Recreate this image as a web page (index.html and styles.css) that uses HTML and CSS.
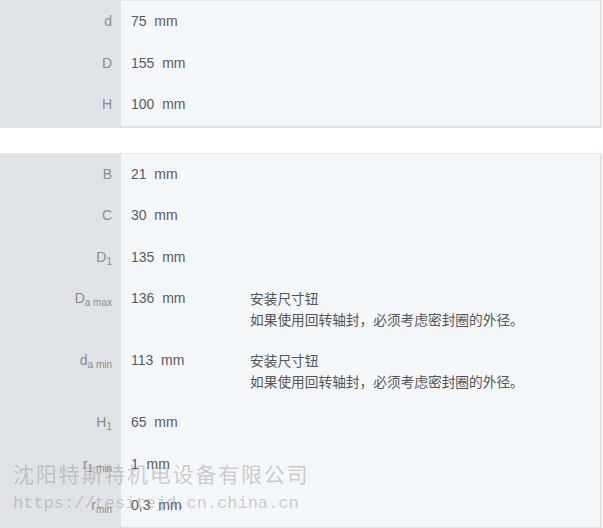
FILE: index.html
```html
<!DOCTYPE html>
<html lang="zh-CN">
<head>
    <meta charset="UTF-8">
    <title>尺寸</title>
    <link rel="stylesheet" href="styles.css">
</head>
<body>
    <div class="page">
        <table class="spec">
            <tr><th>d</th><td class="val">75&nbsp;&nbsp;mm</td><td class="note"></td></tr>
            <tr><th>D</th><td class="val">155&nbsp;&nbsp;mm</td><td class="note"></td></tr>
            <tr><th>H</th><td class="val">100&nbsp;&nbsp;mm</td><td class="note"></td></tr>
        </table>

        <table class="spec">
            <tr><th>B</th><td class="val">21&nbsp;&nbsp;mm</td><td class="note"></td></tr>
            <tr><th>C</th><td class="val">30&nbsp;&nbsp;mm</td><td class="note"></td></tr>
            <tr><th>D<sub>1</sub></th><td class="val">135&nbsp;&nbsp;mm</td><td class="note"></td></tr>
            <tr>
                <th>D<sub>a max</sub></th>
                <td class="val">136&nbsp;&nbsp;mm</td>
                <td class="note">安装尺寸钮<br>如果使用回转轴封，必须考虑密封圈的外径。</td>
            </tr>
            <tr>
                <th>d<sub>a min</sub></th>
                <td class="val">113&nbsp;&nbsp;mm</td>
                <td class="note">安装尺寸钮<br>如果使用回转轴封，必须考虑密封圈的外径。</td>
            </tr>
            <tr><th>H<sub>1</sub></th><td class="val">65&nbsp;&nbsp;mm</td><td class="note"></td></tr>
            <tr><th>r<sub>1 min</sub></th><td class="val">1&nbsp;&nbsp;mm</td><td class="note"></td></tr>
            <tr><th>r<sub>min</sub></th><td class="val">0,3&nbsp;&nbsp;mm</td><td class="note"></td></tr>
        </table>

        <div class="watermark">
            <div class="wm-name">沈阳特斯特机电设备有限公司</div>
            <div class="wm-url">https://tesitejd.cn.china.cn</div>
        </div>
    </div>
</body>
</html>
```

FILE: styles.css
```css
body {
    margin: 0;
    background: #ffffff;
    font-family: "Liberation Sans", Arial, "Noto Sans CJK SC", sans-serif;
    font-size: 14px;
}

.page {
    position: relative;
    width: 603px;
    height: 528px;
    overflow: hidden;
}

.spec {
    width: 602px;
    border-collapse: collapse;
    border-top: 1px solid #e3e7eb;
    border-right: 2px solid #dfe3e7;
    border-bottom: 2px solid #dfe3e7;
    margin-bottom: 25px;
}

.spec th,
.spec td {
    padding: 10px 0;
    line-height: 21.5px;
    vertical-align: top;
}

.spec th {
    width: 112px;
    padding-right: 9px;
    background: #dfe3e7;
    color: #8c8c8c;
    font-weight: normal;
    text-align: right;
}

.spec sub {
    font-size: 10px;
    line-height: 0;
    vertical-align: -3px;
}

.val {
    width: 119px;
    padding-left: 10px !important;
    background: #f4f7fa;
    color: #5a5a5a;
    white-space: nowrap;
}

.note {
    background: #f4f7fa;
    color: #555555;
    font-family: "Noto Sans CJK SC", sans-serif;
    font-size: 13.7px;
    line-height: 21px !important;
}

.watermark {
    position: absolute;
    left: 13px;
    top: 457px;
    color: rgba(140, 140, 140, 0.42);
    pointer-events: none;
}

.wm-name {
    font-family: "Noto Sans CJK SC", sans-serif;
    font-size: 21px;
    letter-spacing: 1.8px;
    line-height: 32px;
}

.wm-url {
    font-family: "Liberation Mono", monospace;
    font-size: 17px;
    line-height: 29px;
}
```
